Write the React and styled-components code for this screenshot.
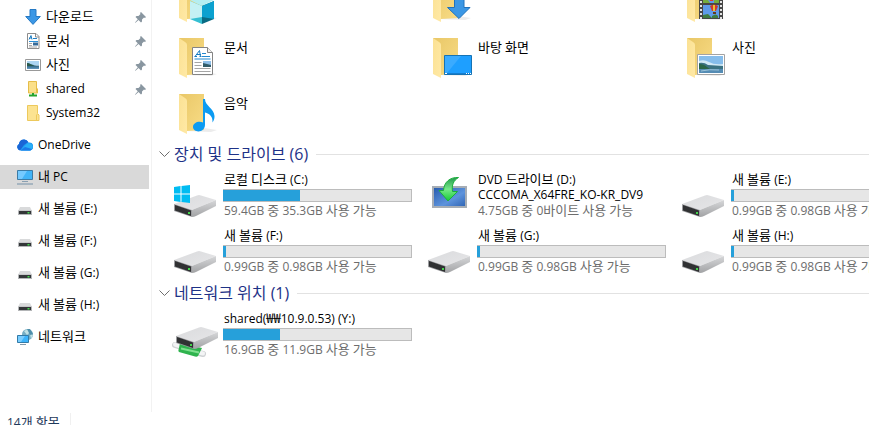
import React, { useState } from 'react';
import styled, { createGlobalStyle } from 'styled-components';

const GlobalStyle = createGlobalStyle`
  * {
    box-sizing: border-box;
  }

  body {
    margin: 0;
    background: #fff;
    color: #000;
    font-family: 'Open Sans', 'Noto Sans CJK KR', sans-serif;
    font-size: 12px;
    line-height: 16px;
    overflow: hidden;
  }
`;

const Explorer = styled.div`
  display: flex;
  flex-direction: column;
  height: 100vh;
  overflow: hidden;
`;

const Panes = styled.div`
  display: flex;
  flex-shrink: 0;
`;

const Sidebar = styled.nav`
  flex: 0 0 152px;
  padding: 5px 2px 0 0;
  border-right: 1px solid #f2f2f2;
`;

const NavGroup = styled.div`
  margin-bottom: 8px;
`;

const NavItem = styled.a`
  display: flex;
  align-items: center;
  gap: 5px;
  height: 24px;
  padding-left: ${props => (props.$nested ? '25px' : '17px')};
  padding-right: 3px;
  background: ${props => (props.$selected ? '#d9d9d9' : 'transparent')};
  color: #000;
  text-decoration: none;
  white-space: nowrap;

  svg {
    flex: none;
  }
`;

const NavLabel = styled.span`
  flex: 1;
`;

const Content = styled.main`
  flex: 1;
  min-width: 0;
  margin-top: -28px;
  padding: 0 0 50px 7px;
  overflow: hidden;
`;

const GroupHeader = styled.button`
  display: flex;
  align-items: center;
  gap: 4px;
  width: 100%;
  height: 27px;
  padding: 0;
  border: 0;
  background: none;
  color: #1e3287;
  font-family: inherit;
  font-size: 16px;
  line-height: 24px;
  white-space: nowrap;

  &::after {
    content: '';
    flex: 1;
    height: 1px;
    margin: 2px 0 0 4px;
    background: #e2e2e2;
  }
`;

/* Hangul is set one size up so that it keeps the optical size of the Latin text */
const HangulRun = styled.span`
  font-size: 13px;
  line-height: 1;
`;

const TileGrid = styled.div`
  display: grid;
  grid-template-columns: repeat(3, 254px);
  padding-left: 12px;
`;

const Tile = styled.div`
  display: flex;
  gap: 4px;
  height: 56px;
  padding: 4px 13px 4px 0;
`;

const TileBody = styled.div`
  flex: 1;
  min-width: 0;
  padding-top: ${props => (props.$folder ? '8px' : '1px')};
  padding-left: 1px;
  white-space: nowrap;
`;

const TileName = styled.div`
  line-height: ${props => (props.$compact ? '15px' : '16px')};
`;

const TileInfo = styled.div`
  padding-top: 1px;
  color: #6d6d6d;
`;

const UsageBar = styled.div`
  height: 13px;
  margin: 1px 0 0 -1px;
  border: 1px solid #bcbcbc;
  background: #e6e6e6;
`;

const UsageFill = styled.div`
  height: 100%;
  min-width: 1px;
  background: #26a0da;
  box-shadow: -1px 0 #26a0da;
`;

const StatusBar = styled.footer`
  display: flex;
  flex-shrink: 0;
  height: 22px;
  padding: 1px 7px;
  color: #1e395b;
  line-height: 20px;
`;

const StatusCount = styled.span`
  padding-right: 10px;
  border-right: 1px solid #f0f0f0;
`;

/* Small 16px icons for the navigation pane */

const DownloadIcon = () => (
  <svg width="16" height="16" viewBox="0 0 16 16">
    <path d="M5 .5h6v7h4.300L8 15.400.7 7.500H5z" fill="#3b97e5" stroke="#2579c4" />
  </svg>
);

const DocumentIcon = () => (
  <svg width="16" height="16" viewBox="0 0 16 16">
    <path d="M2.500.5h8.500l3 3v12H2.500z" fill="#fff" stroke="#8c8c8c" />
    <path d="M10.500.5v3.500H14" fill="none" stroke="#8c8c8c" />
    <path d="M4 6.500 6 2.500 7 6.500M4.500 5H7M8 5.500h4" fill="none" stroke="#1f7fc4" />
    <path d="M4 8.500h9" stroke="#2b8fd6" />
    <path d="M4 10.500h3M4 12.500h3M4 14h8" stroke="#a8a8a8" />
    <path d="M8 9.500h5v3H8z" fill="#356b9a" />
  </svg>
);

const PhotoIcon = () => (
  <svg width="16" height="16" viewBox="0 0 16 16">
    <path d="M.5 2.500h15v11H.5z" fill="#fff" stroke="#999" />
    <path d="M2 4h12v4H2z" fill="#acd5f2" />
    <path d="M2 6.500c3 0 5 2 12 2V12H2z" fill="#39708e" />
    <path d="M2 6c3 0 5 2 7 3H2z" fill="#29594b" />
    <path d="M2 10.500h12V12H2z" fill="#5d91b8" />
  </svg>
);

const SharedFolderIcon = () => (
  <svg width="16" height="16" viewBox="0 0 16 16">
    <path d="M3.500.5h8v6.500l1 1v4h-9z" fill="#fbe08a" stroke="#e5bd49" />
    <path d="M11.500 6.500v5" stroke="#e5bd49" />
    <path d="M8 12v3M4 14.500h8" stroke="#25a32c" strokeWidth="2" />
  </svg>
);

const FolderIcon = () => (
  <svg width="16" height="16" viewBox="0 0 16 16">
    <path d="M2.500.5h10v8l1.500 1.500v5.500H2.500z" fill="#fce391" stroke="#edc95c" />
    <path d="M11.500 15V10l1-1" fill="none" stroke="#edc95c" />
  </svg>
);

const OneDriveIcon = () => (
  <svg width="16" height="16" viewBox="0 0 16 16">
    <path d="M3.500 13.500A3.500 3.500 0 0 1 2 7a5 5 0 0 1 9.500-1.500 4 4 0 0 1 1.500 8z" fill="#1f9cf2" />
    <path d="M2 7a5 5 0 0 1 9.300-2L7 8l-4 5.500A3.500 3.500 0 0 1 2 7z" fill="#1a66d6" />
    <path d="M4 13.500 10 6.500a4 4 0 0 1 5.500 4.500c-.5 2-2 2.500-3 2.500z" fill="#2ab0f8" />
    <path d="M3.500 13.500 8 10l7 2c-.7 1.200-1.700 1.500-3 1.500z" fill="#1b7be8" />
  </svg>
);

const PcIcon = () => (
  <svg width="16" height="16" viewBox="0 0 16 16">
    <path d="M.5 1.500h15v9H.5z" fill="#41b4f8" stroke="#3c7ba5" />
    <path d="M1 2h9l-5 8H1z" fill="#75caff" />
    <path d="M5 12.500h6" stroke="#8aa0b2" />
    <path d="M0 15h16" stroke="#7591a8" />
  </svg>
);

const SmallDriveIcon = () => (
  <svg width="16" height="16" viewBox="0 0 16 16">
    <path d="M3 6h10l2 4H1z" fill="#d9dadb" />
    <path d="M1 9.500h14V14H1z" fill="#b3b5b7" />
    <path d="M2 10h12V13H2z" fill="#333638" />
    <path d="M10.500 11h2v1.500h-2z" fill="#43d84d" />
  </svg>
);

const NetworkIcon = () => (
  <svg width="16" height="16" viewBox="0 0 16 16">
    <circle cx="10.500" cy="5.500" r="5.500" fill="#76aec4" />
    <path d="M7 2l4-2 2 3-3 3zM13 5l3 1-2 4z" fill="#c1e1e5" />
    <path d="M10 0h3l3 5-3 1z" fill="#4f8fab" />
    <path d="M.5 6.500h11v7H.5z" fill="#3db4fb" stroke="#327ba8" />
    <path d="M1 7h7l-4 6H1z" fill="#79cdff" />
    <path d="M3 15.500h6" stroke="#8299aa" />
  </svg>
);

const PinIcon = () => (
  <svg width="11" height="11" viewBox="0 0 11 11">
    <path d="M6 0 11 5 10 6 9 5.500 7 7.500 7 9.500 6 10.500 3.500 8 .5 10.800 0 10.500 2.800 7.300.5 5l1-1h2l2-2L5 1z" fill="#8996a0" />
  </svg>
);

/* Large 48px icons for the tiles */

const LargeFolder = ({ children }) => (
  <svg width="48" height="48" viewBox="0 0 48 48">
    <defs>
      <linearGradient id="folderBack" x1="0" y1="0" x2="1" y2="1">
        <stop offset="0" stopColor="#e9c767" />
        <stop offset="1" stopColor="#f8dc86" />
      </linearGradient>
      <linearGradient id="folderFlap" x1="0" y1="0" x2="1" y2="1">
        <stop offset="0" stopColor="#fbe193" />
        <stop offset="1" stopColor="#ffe9a6" />
      </linearGradient>
    </defs>
    <path d="M14 43 40 44 46 42 33 40z" fill="#ececec" />
    <path d="M8 6h25v36l-17 1z" fill="url(#folderBack)" />
    <path d="M8 6l6 4q2 1 2 3v33l-8-4z" fill="url(#folderFlap)" />
    {children}
  </svg>
);

const ObjectsFolder = () => (
  <LargeFolder>
    <path d="M31 19 43 24 31 30 19 24z" fill="#b4eef2" />
    <path d="M19 25 31 30V48L19 43z" fill="#35bfd2" />
    <path d="M19 25 31 30V41L19 43z" fill="#c4f1f4" />
    <path d="M43 25 31 30V48L43 43z" fill="#0a6b83" />
    <path d="M43 25 31 30V41L43 43z" fill="#0ba1cf" />
  </LargeFolder>
);

const DownloadFolder = () => (
  <LargeFolder>
    <path d="M29.500 20h9.500v11.500h6L34 42.500 22.500 31.500h7z" fill="#3b97e5" stroke="#2072bc" />
  </LargeFolder>
);

const VideoFolder = () => (
  <LargeFolder>
    <path d="M20 12h24v31H20z" fill="#474747" />
    <path d="M22 13v30M42 13v30" stroke="#e4e4e4" strokeWidth="2" strokeDasharray="2 2" />
    <path d="M24 14h16v13H24zM24 29h16v13H24z" fill="#5e9bea" />
    <path d="M24 24h5l2 3h-7zM35 23h5v4h-5z" fill="#76ad40" />
    <path d="M30 22h5l-1 3h-3z" fill="#dc3b2e" />
    <path d="M31 30q4-3 8 0l-2 5h-4z" fill="#cd3830" />
    <path d="M34 29h2v6h-2z" fill="#edbd32" />
    <path d="M24 39l5-1 4 4h-9zM33 40q4-3 6 0v2h-6z" fill="#3f7c42" />
    <path d="M34 36h3v2h-3z" fill="#643b22" />
  </LargeFolder>
);

const DocumentFolder = () => (
  <LargeFolder>
    <path d="M21.500 15.500h15l5 5v22h-20z" fill="#fff" stroke="#848484" />
    <path d="M36.500 15.500v5h5" fill="#f0f0f0" stroke="#848484" />
    <path d="M24 24.500 28.500 18.500 29.500 24.500M26 22.500h4M23.500 24.500h2.500M28.500 24.500h2" fill="none" stroke="#177bc1" />
    <path d="M31 21.500h4M31 24.500h8M23.500 27h16" stroke="#2389cf" />
    <path d="M23.500 30.500h7M23.500 33.500h7M23.500 36.500h16M23.500 39.500h16" stroke="#a5a5a5" />
    <path d="M32 29h8v6h-8z" fill="#8ebfe8" />
    <path d="M32 31l8 2v2h-8z" fill="#315c6a" />
  </LargeFolder>
);

const DesktopFolder = () => (
  <LargeFolder>
    <path d="M19.500 23.500h27v19h-27z" fill="#1e9fff" stroke="#1573b5" />
    <path d="M20 24h16L22 41h-2z" fill="#3aabff" />
    <path d="M20 41.500h26" stroke="#147ed0" />
    <path d="M20 41.500h2M41 41.500h1M43 41.500h1M45 41.500h1" stroke="#fff" />
  </LargeFolder>
);

const PhotoFolder = () => (
  <LargeFolder>
    <path d="M18.500 22.500h27v20h-27z" fill="#fff" stroke="#a3a3a3" />
    <path d="M20 24h24v17H20z" fill="#86bdeb" />
    <path d="M20 29q5-2 10 1t14 2v4H20z" fill="#d2e9f6" />
    <path d="M20 31q5-1 9 2l15 1v3H20z" fill="#3c7383" />
    <path d="M20 32q5 0 8 3l3 2H20z" fill="#2b6647" />
    <path d="M20 37h24v4H20z" fill="#558cb4" />
    <path d="M22 39q8-2 18-1" fill="none" stroke="#9dc4d8" />
  </LargeFolder>
);

const MusicFolder = () => (
  <LargeFolder>
    <path d="M32 11h2c0 7 9 9 9.500 17 .2 3-1 5-2 6.500 .5-6-3-9-7.500-10v12c0 9-12 8.500-12 2.500 0-4.500 6-6.500 10-4.500z" fill="#0c9bf2" />
  </LargeFolder>
);

const DriveShape = () => (
  <>
    <defs>
      <linearGradient id="driveTop" x1="0" y1="0" x2="1" y2="1">
        <stop offset="0" stopColor="#dadbdd" />
        <stop offset="1" stopColor="#e6e6e8" />
      </linearGradient>
      <linearGradient id="driveSide" x1="0" y1="0" x2="0" y2="1">
        <stop offset="0" stopColor="#d6d7d9" />
        <stop offset="1" stopColor="#a2a3a5" />
      </linearGradient>
    </defs>
    <path d="M3 33 26 24.500q2-1 4 0L45 29 21 39z" fill="url(#driveTop)" />
    <path d="M3 33 21 39V46L3 40z" fill="#9b9c9f" />
    <path d="M4 34 20 39.500V45L4 39.500z" fill="#303133" />
    <path d="M21 39 45 29V35L25 45q-2 1-4 1z" fill="url(#driveSide)" />
    <path d="M17 41h2v2h-2z" fill="#43d34b" />
  </>
);

const DriveIcon = () => (
  <svg width="48" height="48" viewBox="0 0 48 48">
    <DriveShape />
  </svg>
);

const SystemDriveIcon = () => (
  <svg width="48" height="48" viewBox="0 0 48 48">
    <DriveShape />
    <path d="M3 16l6.500-1v7.500H3zM10.500 15l8.500-1v8.500h-8.500zM3 23.500h6.500V31L3 30zM10.500 23.500H19V32l-8.500-1z" fill="#00bcf2" />
  </svg>
);

const DvdIcon = () => (
  <svg width="48" height="48" viewBox="0 0 48 48">
    <defs>
      <linearGradient id="dvdScreen" x1="0" y1="0" x2="1" y2="1">
        <stop offset="0" stopColor="#2459ac" />
        <stop offset=".6" stopColor="#5d93dc" />
        <stop offset="1" stopColor="#2d62b2" />
      </linearGradient>
      <linearGradient id="dvdArrow" x1="0" y1="0" x2="0" y2="1">
        <stop offset="0" stopColor="#239a4d" />
        <stop offset=".5" stopColor="#77e889" />
        <stop offset="1" stopColor="#15cc35" />
      </linearGradient>
    </defs>
    <path d="M8 16h33v20H8z" fill="url(#dvdScreen)" stroke="#a6adb5" strokeWidth="2" />
    <path d="M33.500 6.500C25 6 19 11 18.500 19.500H14L23 30 32.500 20.500H27.500C26.500 14 28.500 9.500 33.500 6.500z" fill="url(#dvdArrow)" stroke="#1cae3c" />
  </svg>
);

const NetworkDriveIcon = () => (
  <svg width="48" height="48" viewBox="0 0 48 48">
    <path d="M4 35 10 37" stroke="#cfd2d4" strokeWidth="6" strokeLinecap="round" />
    <path d="M4 34.500 10 36.500" stroke="#f3f4f5" strokeWidth="4" strokeLinecap="round" />
    <path d="M26 42.500 32 44" stroke="#cfd2d4" strokeWidth="6" strokeLinecap="round" />
    <path d="M26 42 32 43.500" stroke="#f3f4f5" strokeWidth="4" strokeLinecap="round" />
    <path d="M9 33 31 38 27 46q-1 1-3 .5L8 42q-1-1-.5-2z" fill="#2fb34e" />
    <path d="M10 38.500 28 42.500" stroke="#7fe08f" strokeWidth="2" />
    <g transform="translate(2 -7)">
      <DriveShape />
    </g>
  </svg>
);

const ChevronIcon = () => (
  <svg width="11" height="9" viewBox="0 0 11 9">
    <path d="M.5 2.500 5.500 7.500l5-5" fill="none" stroke="#6e6e6e" />
  </svg>
);

const quickAccess = [
  { name: '다운로드', icon: DownloadIcon, pinned: true },
  { name: '문서', icon: DocumentIcon, pinned: true },
  { name: '사진', icon: PhotoIcon, pinned: true },
  { name: 'shared', icon: SharedFolderIcon, pinned: true },
  { name: 'System32', icon: FolderIcon },
];

const places = [
  { name: 'OneDrive', icon: OneDriveIcon },
  { name: '내 PC', icon: PcIcon },
  { name: '새 볼륨 (E:)', icon: SmallDriveIcon },
  { name: '새 볼륨 (F:)', icon: SmallDriveIcon },
  { name: '새 볼륨 (G:)', icon: SmallDriveIcon },
  { name: '새 볼륨 (H:)', icon: SmallDriveIcon },
  { name: '네트워크', icon: NetworkIcon },
];

const folders = [
  { name: '', icon: ObjectsFolder },
  { name: '', icon: DownloadFolder },
  { name: '', icon: VideoFolder },
  { name: '문서', icon: DocumentFolder },
  { name: '바탕 화면', icon: DesktopFolder },
  { name: '사진', icon: PhotoFolder },
  { name: '음악', icon: MusicFolder },
];

const drives = [
  { name: '로컬 디스크 (C:)', info: '59.4GB 중 35.3GB 사용 가능', used: 40.6, icon: SystemDriveIcon },
  { name: 'DVD 드라이브 (D:)', label: 'CCCOMA_X64FRE_KO-KR_DV9', info: '4.75GB 중 0바이트 사용 가능', icon: DvdIcon },
  { name: '새 볼륨 (E:)', info: '0.99GB 중 0.98GB 사용 가능', used: 1, icon: DriveIcon },
  { name: '새 볼륨 (F:)', info: '0.99GB 중 0.98GB 사용 가능', used: 1, icon: DriveIcon },
  { name: '새 볼륨 (G:)', info: '0.99GB 중 0.98GB 사용 가능', used: 1, icon: DriveIcon },
  { name: '새 볼륨 (H:)', info: '0.99GB 중 0.98GB 사용 가능', used: 1, icon: DriveIcon },
];

const networkDrives = [
  { name: 'shared(₩₩10.9.0.53) (Y:)', info: '16.9GB 중 11.9GB 사용 가능', used: 30, icon: NetworkDriveIcon },
];

const Text = ({ children }) =>
  children.split(/([가-힣₩]+)/).map((part, index) =>
    index % 2 ? <HangulRun key={index}>{part}</HangulRun> : part
  );

const DriveTile = ({ drive }) => {
  const Icon = drive.icon;

  return (
    <Tile>
      <Icon />
      <TileBody>
        <TileName $compact={Boolean(drive.label)}><Text>{drive.name}</Text></TileName>
        {drive.label && <TileName $compact>{drive.label}</TileName>}
        {drive.used !== undefined && (
          <UsageBar
            role="progressbar"
            aria-label={drive.name}
            aria-valuenow={drive.used}
            aria-valuemin={0}
            aria-valuemax={100}
          >
            <UsageFill style={{ width: `${drive.used}%` }} />
          </UsageBar>
        )}
        <TileInfo><Text>{drive.info}</Text></TileInfo>
      </TileBody>
    </Tile>
  );
};

const DriveGroup = ({ title, drives }) => {
  const [open, setOpen] = useState(true);

  return (
    <section>
      <GroupHeader type="button" aria-expanded={open} onClick={() => setOpen(!open)}>
        <ChevronIcon />
        {`${title} (${drives.length})`}
      </GroupHeader>
      {open && (
        <TileGrid>
          {drives.map(drive => (
            <DriveTile key={drive.name} drive={drive} />
          ))}
        </TileGrid>
      )}
    </section>
  );
};

const App = () => {
  const [selected, setSelected] = useState('내 PC');

  return (
    <>
      <GlobalStyle />
      <Explorer>
        <Panes>
          <Sidebar>
            <NavGroup>
              {quickAccess.map(({ name, icon: Icon, pinned }) => (
                <NavItem key={name} href="#" $nested $selected={selected === name} onClick={() => setSelected(name)}>
                  <Icon />
                  <NavLabel><Text>{name}</Text></NavLabel>
                  {pinned && <PinIcon />}
                </NavItem>
              ))}
            </NavGroup>
            {places.map(({ name, icon: Icon }) => (
              <NavGroup key={name}>
                <NavItem href="#" $selected={selected === name} onClick={() => setSelected(name)}>
                  <Icon />
                  <NavLabel><Text>{name}</Text></NavLabel>
                </NavItem>
              </NavGroup>
            ))}
          </Sidebar>

          <Content>
            <TileGrid>
              {folders.map(({ name, icon: Icon }, index) => (
                <Tile key={index}>
                  <Icon />
                  <TileBody $folder>
                    <TileName><Text>{name}</Text></TileName>
                  </TileBody>
                </Tile>
              ))}
            </TileGrid>
            <DriveGroup title="장치 및 드라이브" drives={drives} />
            <DriveGroup title="네트워크 위치" drives={networkDrives} />
          </Content>
        </Panes>

        <StatusBar>
          <StatusCount><Text>14개 항목</Text></StatusCount>
        </StatusBar>
      </Explorer>
    </>
  );
};

export default App;
